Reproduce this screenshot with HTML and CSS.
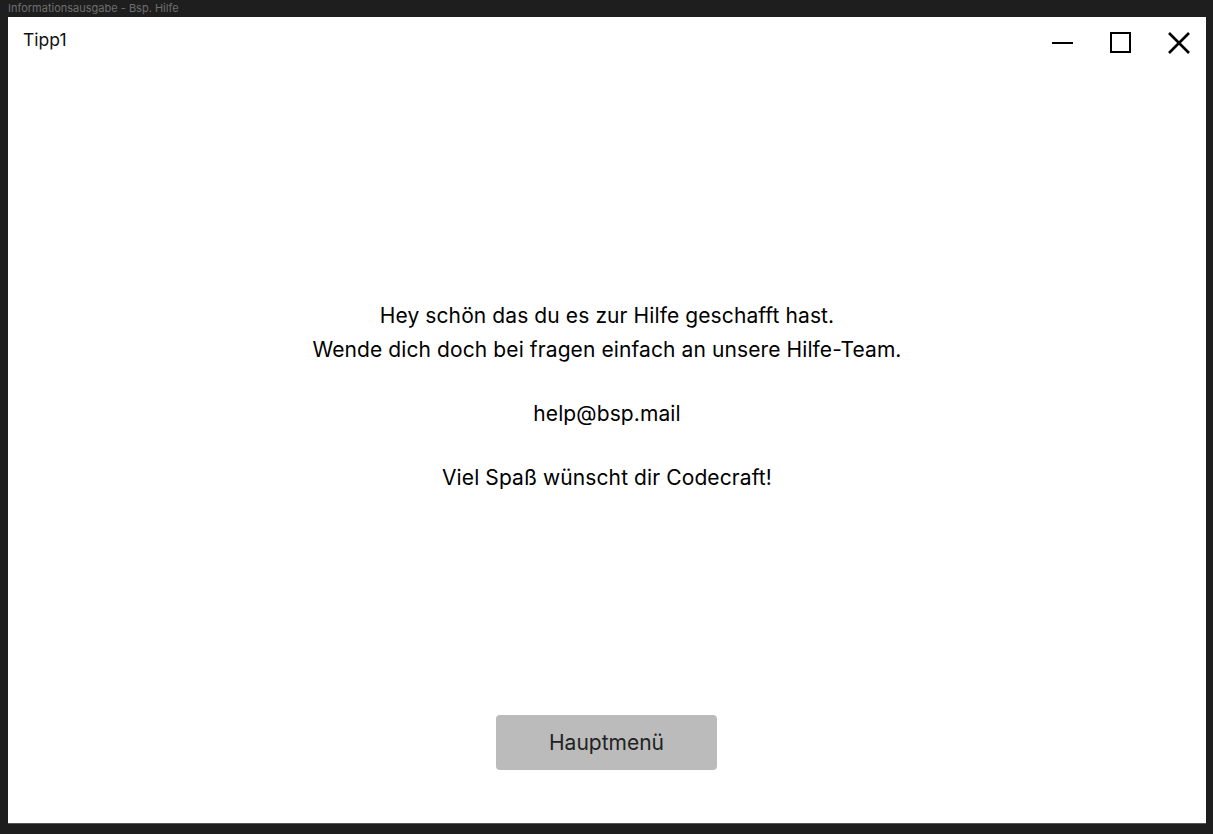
FILE: index.html
```html
<!DOCTYPE html>
<html lang="de">
<head>
<meta charset="utf-8">
<title>Informationsausgabe - Bsp. Hilfe</title>
<link rel="stylesheet" href="styles.css">
</head>
<body>
<div class="app-title">Informationsausgabe - Bsp. Hilfe</div>
<div class="window">
  <div class="header">
    <div class="tab-name">Tipp1</div>
    <div class="controls">
      <svg class="ctl" width="22" height="22" viewBox="0 0 22 22"><line x1="0" y1="11" x2="21" y2="11" stroke="#000" stroke-width="2"/></svg>
      <svg class="ctl" width="22" height="22" viewBox="0 0 22 22"><rect x="1" y="1" width="19" height="19" fill="none" stroke="#000" stroke-width="2"/></svg>
      <svg class="ctl" width="22" height="22" viewBox="0 0 22 22"><path d="M1 1 L21 21 M21 1 L1 21" stroke="#000" stroke-width="2.6" fill="none"/></svg>
    </div>
  </div>
  <div class="message">
    <div class="line">Hey schön das du es zur Hilfe geschafft hast.</div>
    <div class="line">Wende dich doch bei fragen einfach an unsere Hilfe-Team.</div>
    <div class="line gap">help@bsp.mail</div>
    <div class="line gap">Viel Spaß wünscht dir Codecraft!</div>
  </div>
  <div class="footer">
    <button class="menu-btn">Hauptmenü</button>
  </div>
</div>
</body>
</html>
```

FILE: styles.css
```css
html, body {
  margin: 0;
  padding: 0;
  background: #1e1e1e;
  font-family: Inter, "Noto Sans", sans-serif;
}
body {
  width: 1213px;
  height: 834px;
  overflow: hidden;
}
.app-title {
  height: 17px;
  line-height: 17px;
  padding-left: 8px;
  font-size: 11px;
  color: #6e6e6e;
}
.window {
  margin-left: 8px;
  width: 1198px;
  height: 806px;
  background: #ffffff;
  border-bottom: 1px solid #555555;
  display: flex;
  flex-direction: column;
}
.header {
  display: flex;
  justify-content: space-between;
  align-items: flex-start;
  height: 50px;
}
.tab-name {
  margin-left: 15px;
  margin-top: 11px;
  font-size: 17.5px;
  line-height: 24px;
  color: #111;
}
.controls {
  display: flex;
  gap: 36px;
  margin-top: 15px;
  margin-right: 16px;
}
.ctl {
  display: block;
}
.message {
  margin-top: 232px;
  display: flex;
  flex-direction: column;
  align-items: center;
  font-size: 21px;
  letter-spacing: 0.1px;
  line-height: 34px;
  color: #000;
}
.line.gap {
  margin-top: 30px;
}
.footer {
  margin-top: auto;
  margin-bottom: 53px;
  display: flex;
  justify-content: center;
  padding-right: 1px;
}
.menu-btn {
  width: 221px;
  height: 55px;
  background: #bbbbbb;
  border: none;
  border-radius: 4px;
  font-family: Inter, "Noto Sans", sans-serif;
  font-size: 21px;
  color: #222;
  padding: 0;
}
```
